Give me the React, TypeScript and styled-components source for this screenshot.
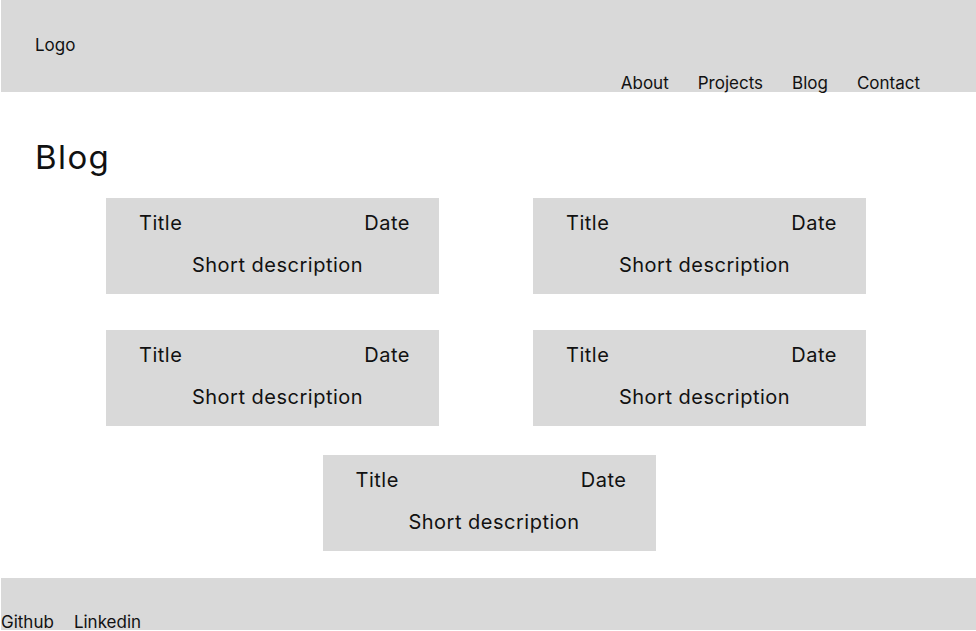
import styled, { createGlobalStyle } from "styled-components";

const GlobalStyle = createGlobalStyle`
    body {
        margin: 0;
        font-family: Inter, "Noto Sans", sans-serif;
        color: #111;
        background: #fff;
    }
`;

const Page = styled.div`
    padding-left: 1px;
    display: flex;
    flex-direction: column;
    min-height: 630px;
`;

const Header = styled.header`
    height: 92px;
    background: #d9d9d9;
    display: flex;
    justify-content: space-between;
    padding: 0 56px 0 34px;
`;

const Logo = styled.div`
    font-size: 17px;
    align-self: center;
    margin-top: -2px;
`;

const Nav = styled.nav`
    display: flex;
    gap: 29px;
    align-self: flex-end;
    font-size: 17px;
    line-height: 20px;
    margin-bottom: -1px;
`;

const Main = styled.main`
    flex: 1;
    padding: 0 0 27px;
`;

const Heading = styled.h1`
    margin: 45px 0 21px 34px;
    font-size: 33px;
    font-weight: 400;
    line-height: 40px;
    letter-spacing: 1.4px;
`;

const Grid = styled.div`
    display: grid;
    grid-template-columns: repeat(2, 333px);
    column-gap: 94px;
    row-gap: 36px;
    justify-content: center;
    padding-right: 5px;
`;

const Single = styled.div`
    display: flex;
    justify-content: center;
    margin-top: 29px;
    padding-left: 1px;
`;

const Card = styled.article`
    width: 333px;
    box-sizing: border-box;
    background: #d9d9d9;
    padding: 13px 29px 16px 33px;
    font-size: 20px;
    line-height: 25px;
    letter-spacing: 0.5px;
`;

const CardTop = styled.div`
    display: flex;
    justify-content: space-between;
`;

const Desc = styled.p`
    margin: 17px 0 0;
    text-align: center;
    padding-left: 6px;
`;

const Footer = styled.footer`
    height: 52px;
    background: #d9d9d9;
    display: flex;
    align-items: flex-end;
    gap: 20px;
    font-size: 17px;
    line-height: 20px;
    margin-bottom: 1px;
`;

const FooterLink = styled.span`
    margin-bottom: -2px;
`;

const BlogCard = () => (
    <Card>
        <CardTop>
            <span>Title</span>
            <span>Date</span>
        </CardTop>
        <Desc>Short description</Desc>
    </Card>
);

const App = () => {
    return (
        <>
            <GlobalStyle />
            <Page>
                <Header>
                    <Logo>Logo</Logo>
                    <Nav>
                        <span>About</span>
                        <span>Projects</span>
                        <span>Blog</span>
                        <span>Contact</span>
                    </Nav>
                </Header>
                <Main>
                    <Heading>Blog</Heading>
                    <Grid>
                        <BlogCard />
                        <BlogCard />
                        <BlogCard />
                        <BlogCard />
                    </Grid>
                    <Single>
                        <BlogCard />
                    </Single>
                </Main>
                <Footer>
                    <FooterLink>Github</FooterLink>
                    <FooterLink>Linkedin</FooterLink>
                </Footer>
            </Page>
        </>
    );
};

export default App;
